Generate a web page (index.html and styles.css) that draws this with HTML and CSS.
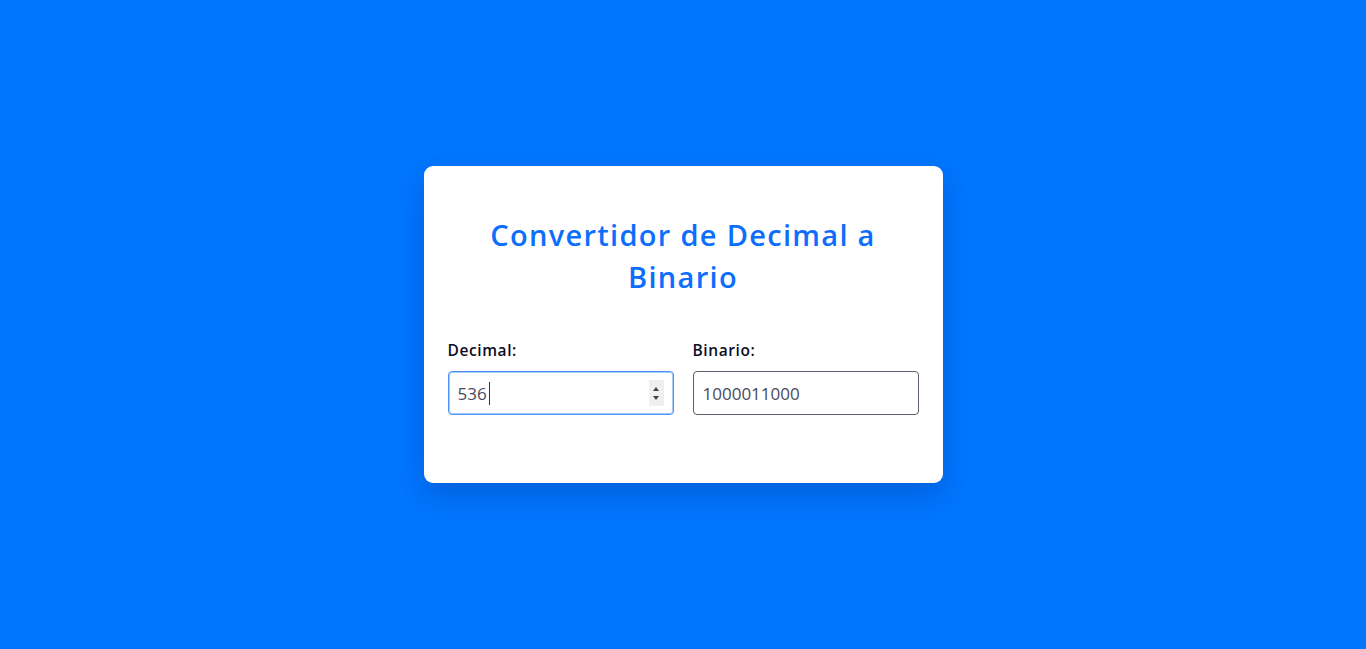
FILE: index.html
```html
<!DOCTYPE html>
<html lang="es">
<head>
<meta charset="utf-8">
<title>Convertidor de Decimal a Binario</title>
<link rel="stylesheet" href="styles.css">
</head>
<body>
<main class="card">
  <h2 class="title">Convertidor de Decimal a Binario</h2>
  <div class="fields">
    <div class="field">
      <label class="label" for="dec">Decimal:</label>
      <div class="input-wrap">
        <input class="input input-focus" id="dec" type="number" value="536">
        <span class="caret"></span>
        <span class="spinner"><span class="up"></span><span class="down"></span></span>
      </div>
    </div>
    <div class="field">
      <label class="label" for="bin">Binario:</label>
      <div class="input-wrap">
        <input class="input" id="bin" type="text" value="1000011000" readonly>
      </div>
    </div>
  </div>
</main>
</body>
</html>
```
FILE: styles.css
```css
* { box-sizing: border-box; }
html, body { margin: 0; padding: 0; }
body {
  background: #0076ff;
  height: 100vh;
  display: flex;
  align-items: center;
  justify-content: center;
  font-family: "Open Sans", "Noto Sans", sans-serif;
}
.card {
  width: 519px;
  background: #fff;
  border-radius: 9px;
  padding: 24px;
  box-shadow: 0 12px 30px rgba(0, 40, 120, 0.28);
}
.title {
  margin: 24px 0 0;
  padding: 0 30px;
  text-align: center;
  color: #0d6efd;
  font-size: 29px;
  letter-spacing: 1.3px;
  line-height: 42px;
  font-weight: 600;
}
.fields {
  margin-top: 41px;
  margin-bottom: 44px;
  display: grid;
  grid-template-columns: 1fr 1fr;
  column-gap: 19px;
}
.field { display: flex; flex-direction: column; }
.label {
  font-size: 15.5px;
  line-height: 22px;
  font-weight: 600;
  letter-spacing: 0.6px;
  color: #0c0c24;
  margin-bottom: 10px;
}
.input-wrap { position: relative; }
.input {
  display: block;
  height: 44px;
  width: 100%;
  border: 1px solid #5e5e6c;
  border-radius: 4px;
  padding: 0 9px;
  font-family: inherit;
  font-size: 17px;
  color: #4a4a5c;
  background: #fff;
  outline: none;
}
.input::-webkit-inner-spin-button,
.input::-webkit-outer-spin-button { -webkit-appearance: none; margin: 0; }
.input-focus {
  border-color: #4c93f7;
  box-shadow: inset 0 0 0 1px #a9cbfb;
}
.caret {
  position: absolute;
  left: 41px;
  top: 11px;
  width: 1px;
  height: 23px;
  background: #333;
}
.spinner {
  position: absolute;
  right: 10px;
  top: 9px;
  width: 15px;
  height: 26px;
  background: #efefef;
  display: flex;
  flex-direction: column;
  align-items: center;
  justify-content: center;
  gap: 5px;
}
.up, .down {
  width: 0;
  height: 0;
  border-left: 3.5px solid transparent;
  border-right: 3.5px solid transparent;
}
.up { border-bottom: 4px solid #444; }
.down { border-top: 4px solid #444; }
```
